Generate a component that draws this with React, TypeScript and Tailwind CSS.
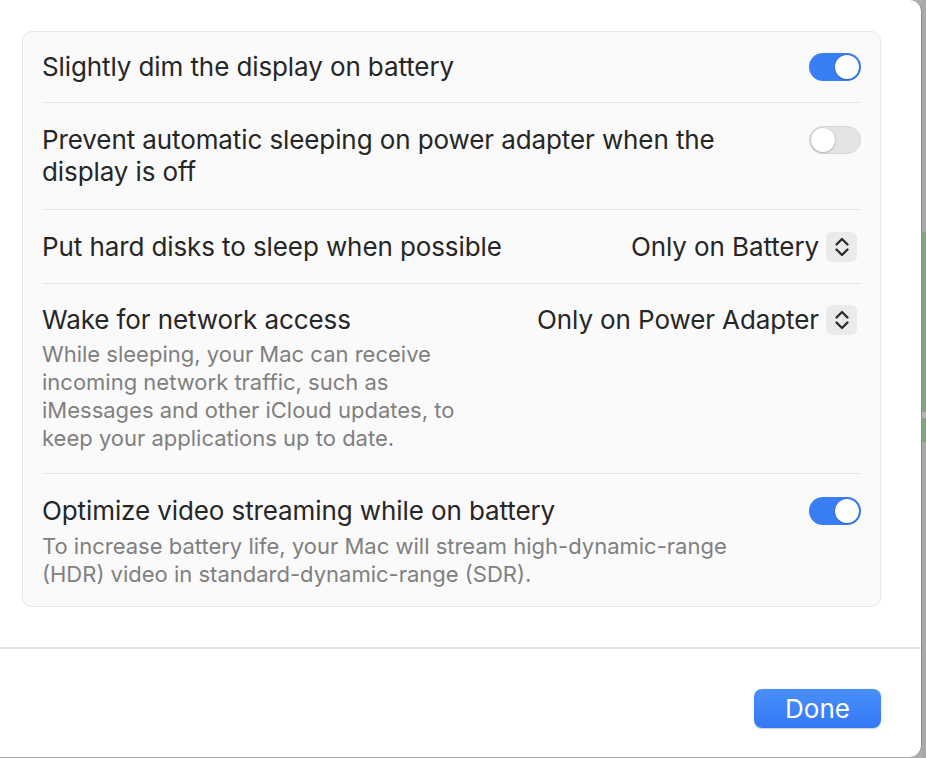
import React from "react"

function Toggle({ on }: { on: boolean }) {
  return (
    <div
      className={
        on
          ? "w-[52px] h-[28px] rounded-full bg-[#3a7ef6] flex items-center justify-end px-[2px] shrink-0"
          : "w-[52px] h-[28px] rounded-full bg-[#e4e4e4] border border-[#d6d6d6] flex items-center justify-start px-[1px] shrink-0"
      }
    >
      <div className="w-[24px] h-[24px] rounded-full bg-white shadow-[0_0.5px_2px_rgba(0,0,0,0.35)]" />
    </div>
  )
}

function Stepper() {
  return (
    <div className="w-[31px] h-[30px] rounded-[6px] bg-[#ebebeb] flex items-center justify-center shrink-0">
      <svg width="18" height="24" viewBox="0 0 18 24" fill="none">
        <path d="M3.5 9.5 L9 4 L14.5 9.5" stroke="#2a2a2a" strokeWidth="2.3" strokeLinecap="round" strokeLinejoin="round" />
        <path d="M3.5 14.5 L9 20 L14.5 14.5" stroke="#2a2a2a" strokeWidth="2.3" strokeLinecap="round" strokeLinejoin="round" />
      </svg>
    </div>
  )
}

function Select({ label }: { label: string }) {
  return (
    <div className="flex items-center gap-[7px] shrink-0 pr-[4px]">
      <span className="text-[26px] leading-[32px] tracking-[-0.1px] text-[#262626]">{label}</span>
      <Stepper />
    </div>
  )
}

const Divider = () => <div className="h-px bg-[#e6e6e6]" />

const title = "text-[26px] leading-[32px] tracking-[-0.1px] text-[#262626]"
const desc = "text-[22px] leading-[28px] text-[#808080]"

export default function App() {
  return (
    <div
      className="flex w-[926px] h-[758px] bg-[#adadad] overflow-hidden"
      style={{ fontFamily: "Inter, 'Noto Sans', sans-serif" }}
    >
      <div className="w-[922px] h-[757px] bg-white rounded-r-[12px] border-r border-[#8e8e8e] flex flex-col shrink-0">
        <div className="pl-[22px] pr-[40px] pt-[31px] h-[647px]">
          <div className="rounded-[10px] bg-[#fafafa] border border-[#e7e7e7] px-[19px]">
            <div className="flex items-center justify-between py-[19px]">
              <span className={title}>Slightly dim the display on battery</span>
              <Toggle on />
            </div>
            <Divider />
            <div className="flex items-start justify-between gap-12 py-[21px]">
              <span className={title}>
                Prevent automatic sleeping on power adapter when the display is off
              </span>
              <div className="pt-[2px]">
                <Toggle on={false} />
              </div>
            </div>
            <Divider />
            <div className="flex items-center justify-between pt-[21px] pb-[20px]">
              <span className={title}>Put hard disks to sleep when possible</span>
              <Select label="Only on Battery" />
            </div>
            <Divider />
            <div className="flex items-start justify-between pt-[20px] pb-[21px]">
              <div className="w-[450px] flex flex-col gap-[4px]">
                <span className={title}>Wake for network access</span>
                <span className={desc}>
                  While sleeping, your Mac can receive incoming network traffic, such as iMessages and other iCloud updates, to keep your applications up to date.
                </span>
              </div>
              <Select label="Only on Power Adapter" />
            </div>
            <Divider />
            <div className="flex items-start justify-between gap-12 pt-[21px] pb-[18px]">
              <div className="flex flex-col gap-[5px]">
                <span className={title}>Optimize video streaming while on battery</span>
                <span className={desc}>
                  To increase battery life, your Mac will stream high-dynamic-range (HDR) video in standard-dynamic-range (SDR).
                </span>
              </div>
              <div className="pt-[2px]">
                <Toggle on />
              </div>
            </div>
          </div>
        </div>
        <div className="h-[2px] bg-[#e3e3e3]" />
        <div className="flex-1 flex justify-end items-start pt-[40px] pr-[40px]">
          <button className="w-[127px] h-[39px] rounded-[8px] bg-gradient-to-b from-[#4a8ff8] to-[#3478f6] text-white text-[26px] leading-[39px] shadow-[0_0.5px_1.5px_rgba(0,0,0,0.2)]">
            Done
          </button>
        </div>
      </div>
      <div className="flex-1 flex flex-col">
        <div className="h-[232px] bg-[#a9a9a9]" />
        <div className="h-[180px] bg-[#7ea57b]" />
        <div className="h-[6px] bg-[#b4b4b4]" />
        <div className="h-[24px] bg-[#7ea57b]" />
        <div className="flex-1 bg-[#a9a9a9]" />
      </div>
    </div>
  )
}
